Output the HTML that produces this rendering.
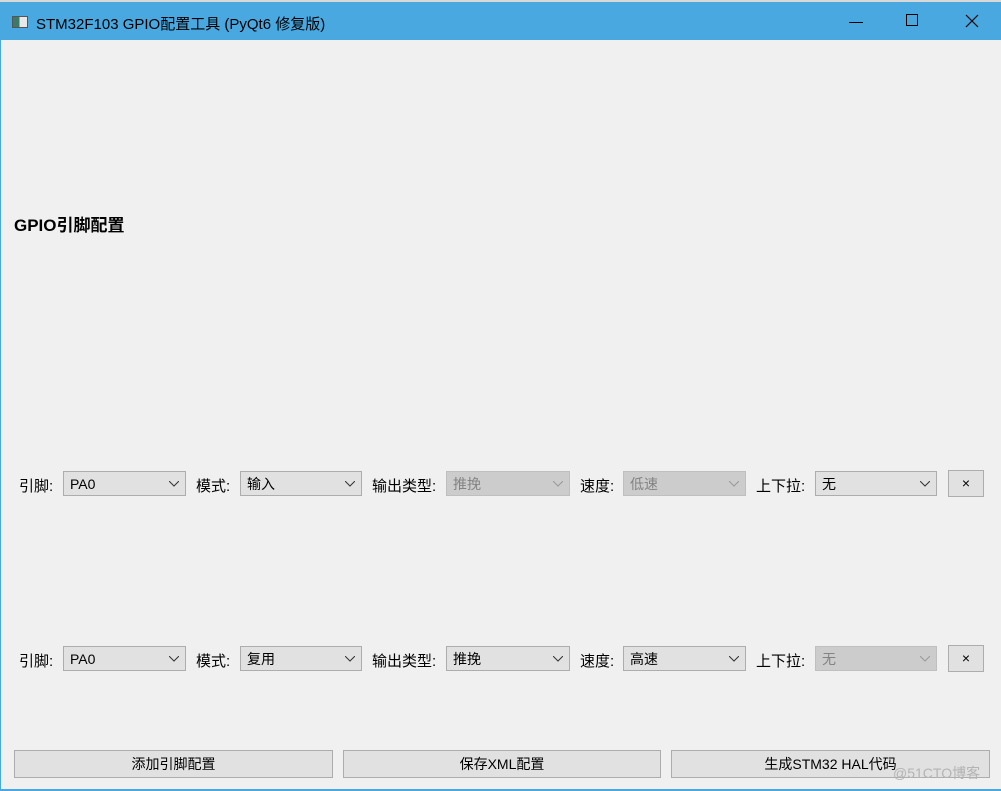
<!DOCTYPE html>
<html><head><meta charset="utf-8"><style>
*{box-sizing:border-box;margin:0;padding:0}
body{width:1001px;height:791px;background:#f0f0f0;position:relative;overflow:hidden;font-family:"Liberation Sans","Noto Sans CJK SC",sans-serif;font-size:14px;color:#000}
.top{position:absolute;left:0;top:0;width:1001px;height:2px;background:#d8d8d8}
.tb{position:absolute;left:0;top:2px;width:1001px;height:38px;background:#4aa8e0}
.tt{position:absolute;left:36px;top:11px;font-size:15px;color:#000}
.ico{position:absolute;left:12px;top:14px;width:16px;height:12px;border:1px solid #555;background:linear-gradient(90deg,#3a7a6a 0 45%,#e8e8e8 45%)}
.lb{position:absolute;left:0;top:40px;width:1px;height:751px;background:#4aa8e0}
.bb{position:absolute;left:0;top:789px;width:1001px;height:2px;background:#4aa8e0}
.h{position:absolute;left:14px;top:211px;font-weight:bold;font-size:17px}
.l{position:absolute;font-size:15px}
.c{position:absolute;height:25px;border:1px solid #adadad;background:#e1e1e1;padding:5px 6px 3px;font-size:14px;line-height:15px}
.c.d{background:#cccccc;border-color:#bfbfbf;color:#838383}
.c svg{position:absolute;right:6px;top:9px}
.x{position:absolute;width:36px;height:27px;border:1px solid #adadad;background:#e1e1e1;text-align:center;line-height:24px;font-size:14px}
.b{position:absolute;top:750px;height:28px;border:1px solid #adadad;background:#e1e1e1;text-align:center;line-height:26px;font-size:14px}
.wm{position:absolute;left:893px;top:763px;color:#b4b4b4;font-size:14px}
</style></head><body>
<div class="top"></div>
<div class="tb"><div class="ico"></div><div class="tt">STM32F103 GPIO配置工具 (PyQt6 修复版)</div>
<svg style="position:absolute;left:849px;top:20px" width="14" height="2"><rect width="14" height="1" fill="#000"/></svg>
<svg style="position:absolute;left:906px;top:12px" width="13" height="13"><rect x=".5" y=".5" width="11" height="11" fill="none" stroke="#000"/></svg>
<svg style="position:absolute;left:965px;top:12px" width="14" height="14"><path d="M1 1L13 13M13 1L1 13" stroke="#000" stroke-width="1.2"/></svg>
</div>
<div class="lb"></div><div class="bb"></div>
<div class="h">GPIO引脚配置</div>

<div class="l" style="left:19px;top:475px">引脚:</div>
<div class="c" style="left:63px;top:471px;width:123px">PA0<svg width="10" height="6"><path d="M0 0L5 5L10 0" fill="none" stroke="#333"/></svg></div>
<div class="l" style="left:196px;top:475px">模式:</div>
<div class="c" style="left:240px;top:471px;width:122px">输入<svg width="10" height="6"><path d="M0 0L5 5L10 0" fill="none" stroke="#333"/></svg></div>
<div class="l" style="left:372px;top:475px">输出类型:</div>
<div class="c d" style="left:446px;top:471px;width:124px">推挽<svg width="10" height="6"><path d="M0 0L5 5L10 0" fill="none" stroke="#999"/></svg></div>
<div class="l" style="left:580px;top:475px">速度:</div>
<div class="c d" style="left:623px;top:471px;width:123px">低速<svg width="10" height="6"><path d="M0 0L5 5L10 0" fill="none" stroke="#999"/></svg></div>
<div class="l" style="left:756px;top:475px">上下拉:</div>
<div class="c" style="left:815px;top:471px;width:122px">无<svg width="10" height="6"><path d="M0 0L5 5L10 0" fill="none" stroke="#333"/></svg></div>
<div class="x" style="left:948px;top:470px">×</div>

<div class="l" style="left:19px;top:650px">引脚:</div>
<div class="c" style="left:63px;top:646px;width:123px">PA0<svg width="10" height="6"><path d="M0 0L5 5L10 0" fill="none" stroke="#333"/></svg></div>
<div class="l" style="left:196px;top:650px">模式:</div>
<div class="c" style="left:240px;top:646px;width:122px">复用<svg width="10" height="6"><path d="M0 0L5 5L10 0" fill="none" stroke="#333"/></svg></div>
<div class="l" style="left:372px;top:650px">输出类型:</div>
<div class="c" style="left:446px;top:646px;width:124px">推挽<svg width="10" height="6"><path d="M0 0L5 5L10 0" fill="none" stroke="#333"/></svg></div>
<div class="l" style="left:580px;top:650px">速度:</div>
<div class="c" style="left:623px;top:646px;width:123px">高速<svg width="10" height="6"><path d="M0 0L5 5L10 0" fill="none" stroke="#333"/></svg></div>
<div class="l" style="left:756px;top:650px">上下拉:</div>
<div class="c d" style="left:815px;top:646px;width:122px">无<svg width="10" height="6"><path d="M0 0L5 5L10 0" fill="none" stroke="#999"/></svg></div>
<div class="x" style="left:948px;top:645px">×</div>

<div class="b" style="left:14px;width:319px">添加引脚配置</div>
<div class="b" style="left:343px;width:318px">保存XML配置</div>
<div class="b" style="left:671px;width:319px">生成STM32 HAL代码</div>
<div class="wm">@51CTO博客</div>
</body></html>
